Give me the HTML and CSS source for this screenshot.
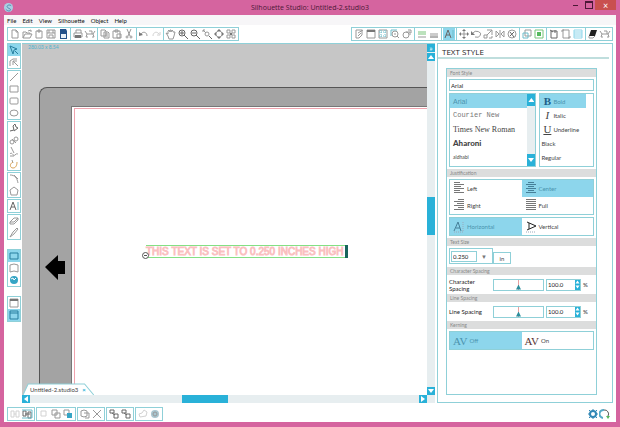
FILE: index.html
```html
<!DOCTYPE html>
<html lang="en">
<head>
  <meta charset="UTF-8">
  <meta name="viewport" content="width=device-width, initial-scale=1.0">
  <title>Silhouette Studio: Untitled-2.studio3</title>
  <link rel="stylesheet" href="styles.css">
</head>
<body>
  <!-- Icon set, 12x12 grid -->
  <svg class="sprite" aria-hidden="true">
    <symbol id="new" viewBox="0 0 12 12"><path d="M3 2h4l2 2v6H3zM7 2v2h2"/></symbol>
    <symbol id="open" viewBox="0 0 12 12"><path d="M2 10V4h3l1 1h3v1M2 10l2-4h7l-2 4zM7 3l3-1v2"/></symbol>
    <symbol id="library" viewBox="0 0 12 12"><path d="M3 3h6v7H3zM5 2h2v2H5z"/></symbol>
    <symbol id="save" viewBox="0 0 12 12"><path d="M2 2h8v8H2zM4 2v3h4V2M4 10V7h4v3M2 5h2M8 5h2"/></symbol>
    <symbol id="card" viewBox="0 0 12 12"><path class="navy" d="M3 1h6l1 2v8H3z"/><path class="paper" d="M4 6h5v4H4z"/></symbol>
    <symbol id="print" viewBox="0 0 12 12"><path d="M4 5V2h5v3M2 5h8v4H2z"/><path class="ink" d="M3 7h6v3H3z"/></symbol>
    <symbol id="cutter" viewBox="0 0 12 12"><path d="M1 3l2 3h6l2-3M3 6L2 9h2M9 6l1 3H8M5 3h3v3"/></symbol>
    <symbol id="copy" viewBox="0 0 12 12"><path d="M2 2h4l1 1v5H2zM5 4h4l1 1v5H5zM6 6h3M6 8h3"/></symbol>
    <symbol id="paste" viewBox="0 0 12 12"><path d="M2 3h7v7H2zM4 2h3v2H4zM6 6h4v4H6z"/></symbol>
    <symbol id="cut" viewBox="0 0 12 12"><path d="M4 1l3 7M8 1L5 8"/><circle cx="4" cy="9" r="1"/><circle cx="8" cy="9" r="1"/></symbol>
    <symbol id="undo" viewBox="0 0 12 12"><path d="M3 6c2-3 6-2 6 2"/><path class="ink" d="M1 4v4l4-1z"/></symbol>
    <symbol id="redo" viewBox="0 0 12 12"><path class="faint" d="M9 6C7 3 3 4 3 8M10 4v3H7"/></symbol>
    <symbol id="pan" viewBox="0 0 12 12"><path d="M3 8L1 5l2 1V3l1-1 1 2V2h1v2l1-2 1 1v1l2 0-1 4-1 3H4z"/></symbol>
    <symbol id="zoomin" viewBox="0 0 12 12"><circle class="bold" cx="5" cy="5" r="3"/><path class="bold" d="M7 7l4 4M5 3v4M3 5h4"/></symbol>
    <symbol id="zoomout" viewBox="0 0 12 12"><circle class="bold" cx="5" cy="5" r="3"/><path class="bold" d="M7 7l4 4M3 5h4"/></symbol>
    <symbol id="zoomsel" viewBox="0 0 12 12"><path d="M2 2l3 3M2 4V2h2"/><circle cx="6" cy="6" r="2"/><path class="bold" d="M8 8l3 3"/></symbol>
    <symbol id="drag" viewBox="0 0 12 12"><circle cx="6" cy="6" r="3"/><path class="ink" d="M6 1l2 2H4zM6 11l2-2H4zM1 6l2-2v4zM11 6L9 4v4z"/></symbol>
    <symbol id="fit" viewBox="0 0 12 12"><path d="M2 2h3v3H2zM7 2h3v3H7zM2 7h3v3H2zM7 7h3v3H7z"/><path class="ink" d="M5 5h2v2H5z"/></symbol>
    <symbol id="page" viewBox="0 0 12 12"><path d="M3 2h6v5l-3 3H3zM5 5l5-3M5 8l3-3"/></symbol>
    <symbol id="window" viewBox="0 0 12 12"><path d="M2 2h8v8H2z"/><path class="ink" d="M2 2h8v2H2z"/></symbol>
    <symbol id="grid" viewBox="0 0 12 12"><path d="M2 2h8v8H2z"/><path class="teal" d="M4 2v8M8 2v8M2 4h8M2 8h8" stroke-dasharray="1 1"/></symbol>
    <symbol id="loupe" viewBox="0 0 12 12"><path class="teal" d="M2 2h6M2 2v6"/><circle cx="6" cy="6" r="3"/><path d="M8 8l2 2M6 5v2"/></symbol>
    <symbol id="offset" viewBox="0 0 12 12"><circle cx="5" cy="7" r="3"/><path d="M5 4h4v3M7 2h3v3"/></symbol>
    <symbol id="lines" viewBox="0 0 12 12"><path class="green" d="M2 4h8M2 6h8"/><path d="M2 9h8"/></symbol>
    <symbol id="ruler" viewBox="0 0 12 12"><path class="bold" d="M2 9h8"/><path d="M3 5v3M5 5v3M7 5v3M9 5v3"/></symbol>
    <symbol id="letter" viewBox="0 0 12 12"><path d="M2 10l3-8 3 8M3 7h4" class="bold"/><path class="teal" d="M10 2v8"/></symbol>
    <symbol id="move" viewBox="0 0 12 12"><path d="M6 2v8M2 6h8"/><path class="ink" d="M6 1l2 2H4zM6 11l2-2H4zM1 6l2-2v4zM11 6L9 4v4z"/></symbol>
    <symbol id="rotate" viewBox="0 0 12 12"><path d="M3 5a4 3 0 1 1 2 4"/><path class="ink" d="M1 3v4h4z"/></symbol>
    <symbol id="scale" viewBox="0 0 12 12"><path d="M2 7h3v3H2zM5 2h5v5M5 7l5-5M7 10h3V8"/></symbol>
    <symbol id="mirror" viewBox="0 0 12 12"><path d="M2 3v6l3-3zM10 3v6L7 6zM6 2v8"/></symbol>
    <symbol id="replicate" viewBox="0 0 12 12"><circle cx="6" cy="6" r="4"/><path class="bold" d="M4 4l4 5M8 4L4 8"/></symbol>
    <symbol id="modify" viewBox="0 0 12 12"><path d="M4 2h6v6H4z"/><path class="teal" d="M2 5h5v5H2z"/></symbol>
    <symbol id="trace" viewBox="0 0 12 12"><path class="green" d="M2 2h8v8H2z"/><path class="greenfill" d="M4 4h4v4H4z"/></symbol>
    <symbol id="book" viewBox="0 0 12 12"><path class="bold" d="M3 3h6v7H3zM2 2l3 2M7 2v3"/></symbol>
    <symbol id="regmark" viewBox="0 0 12 12"><path d="M3 2h6v8H3z"/><path d="M2 4V2h2M8 10h2V8"/></symbol>
    <symbol id="mesh" viewBox="0 0 12 12"><path class="sky" d="M2 2h8v8H2zM2 4h8M2 6h8M2 8h8"/></symbol>
    <symbol id="blade" viewBox="0 0 12 12"><path class="black" d="M4 2h6L8 8H2z"/><path d="M2 8v2h4l2-2"/></symbol>

    <symbol id="select" viewBox="0 0 12 12"><path class="tealdark" d="M2 2l7 3-3 1-1 4zM7 7l3 3"/></symbol>
    <symbol id="nodes" viewBox="0 0 12 12"><path d="M2 10V5l3-2h4M5 5l5 5M5 5v4M5 5h4"/></symbol>
    <symbol id="line" viewBox="0 0 12 12"><path d="M2 10l8-8"/></symbol>
    <symbol id="rect" viewBox="0 0 12 12"><path d="M2 3h8v6H2z"/></symbol>
    <symbol id="rrect" viewBox="0 0 12 12"><rect x="2" y="3" width="8" height="6" rx="1"/></symbol>
    <symbol id="ellipse" viewBox="0 0 12 12"><ellipse cx="6" cy="6" rx="4" ry="3"/></symbol>
    <symbol id="poly" viewBox="0 0 12 12"><path class="bold" d="M2 9l4-1-1-4 2-2 1 3 2 1-4 3"/></symbol>
    <symbol id="curve" viewBox="0 0 12 12"><circle cx="4" cy="8" r="2"/><circle cx="8" cy="5" r="2"/><path d="M4 5l4 4"/></symbol>
    <symbol id="freehand" viewBox="0 0 12 12"><path d="M3 1l3 6M2 8c2-3 3 3 5 1s2-1 3-1M2 10h4"/></symbol>
    <symbol id="smooth" viewBox="0 0 12 12"><path d="M4 2l1 3"/><path class="orange" d="M5 4C1 6 2 10 5 10s4-3 4-6"/></symbol>
    <symbol id="arc" viewBox="0 0 12 12"><path d="M2 2c5 0 7 3 8 8M6 2l4 4"/></symbol>
    <symbol id="polygon" viewBox="0 0 12 12"><path d="M6 2l4 3-1 5H3L2 5z"/></symbol>
    <symbol id="eraser" viewBox="0 0 12 12"><path d="M2 7l4-4h4l0 2-4 4H2zM2 7h4l4-4"/></symbol>
    <symbol id="knife" viewBox="0 0 12 12"><path d="M2 10l3-5 4-4 1 1-4 5z"/></symbol>
    <symbol id="viewdesign" viewBox="0 0 12 12"><path class="tealdark" d="M2 3h8v6H2z"/></symbol>
    <symbol id="viewpage" viewBox="0 0 12 12"><path d="M2 3l4-1 4 1v7L6 9l-4 1z"/></symbol>
    <symbol id="globe" viewBox="0 0 12 12"><circle class="cyan" cx="6" cy="6" r="4"/><path class="white" d="M3 5l2-1 1 2 2-2"/></symbol>
    <symbol id="ball" viewBox="0 0 12 12"><circle class="mist" cx="6" cy="6" r="4"/><circle cx="6" cy="6" r="2"/></symbol>
    <symbol id="split" viewBox="0 0 12 12"><path class="tealdark" d="M2 2h8v8H2zM2 4h8"/></symbol>

    <symbol id="group" viewBox="0 0 12 12"><path class="faint" d="M2 3h3v6H2zM7 3h3v6H7zM5 6h2"/></symbol>
    <symbol id="ungroup" viewBox="0 0 12 12"><path class="bold" d="M2 3h3v5H2zM7 4h3v6H7zM4 6h5"/><path class="teal" d="M1 2h10v8H1"/></symbol>
    <symbol id="blank" viewBox="0 0 12 12"><path class="faint" d="M3 3h5v5H3z"/></symbol>
    <symbol id="front" viewBox="0 0 12 12"><path d="M2 2h5v5H2zM5 5h5v5H5z"/></symbol>
    <symbol id="weld" viewBox="0 0 12 12"><path d="M2 2h5v5H2z"/><path class="cyan" d="M5 5h5v5H5z"/></symbol>
    <symbol id="dup" viewBox="0 0 12 12"><path d="M2 3l3-1 3 1v5l-3 1-3-1zM5 5h5v5H6"/></symbol>
    <symbol id="delete" viewBox="0 0 12 12"><path d="M2 2l8 8M10 2l-8 8"/></symbol>
    <symbol id="chain" viewBox="0 0 12 12"><path class="bold" d="M2 2h4v3H2zM6 6h4v4H6zM4 5l3 2"/></symbol>
    <symbol id="cloud" viewBox="0 0 12 12"><path class="faint" d="M3 9L2 6l3-1 2-3 3 2-1 4z"/></symbol>
    <symbol id="gear" viewBox="0 0 12 12"><circle class="thick" cx="6" cy="6" r="3"/><path class="teeth" d="M6 1v2M6 9v2M1 6h2M9 6h2M2 2l2 2M8 8l2 2M10 2L8 4M4 8l-2 2"/></symbol>
    <symbol id="refresh" viewBox="0 0 12 12"><path class="refresh" d="M4 10a4 4 0 0 1 1-8"/><path class="dark" d="M5 2a4 4 0 0 1 4 6"/><path class="greenfill" d="M7 8l4 0-2 3z"/></symbol>
  </svg>

  <header class="titlebar">
    <svg class="logo" viewBox="0 0 10 10"><circle cx="5" cy="5" r="5" fill="#a9cfe3"/><path d="M8 3C6 1 2 3 4 5s4 1 3 3-4 0-5-1" fill="none" stroke="#4f87ad"/></svg>
    <h1>Silhouette Studio: Untitled-2.studio3</h1>
    <div class="window-buttons">
      <button class="win minimize" aria-label="Minimize"></button>
      <button class="win maximize" aria-label="Maximize"></button>
      <button class="win close" aria-label="Close">×</button>
    </div>
  </header>

  <div class="window">
    <nav class="menu">
      <button>File</button>
      <button>Edit</button>
      <button>View</button>
      <button>Silhouette</button>
      <button>Object</button>
      <button>Help</button>
    </nav>

    <div class="toolbar">
      <div class="tools" data-icons="new open library save card"></div>
      <div class="tools" data-icons="print cutter"></div>
      <div class="tools" data-icons="copy paste cut"></div>
      <div class="tools" data-icons="undo redo"></div>
      <div class="tools" data-icons="pan zoomin zoomout zoomsel drag fit"></div>
      <div class="tools push" data-icons="page window grid loupe offset"></div>
      <div class="tools" data-icons="lines ruler"></div>
      <div class="tools" data-icons="letter" data-active="letter"></div>
      <div class="tools" data-icons="move rotate scale mirror replicate"></div>
      <div class="tools" data-icons="modify trace"></div>
      <div class="tools" data-icons="book regmark mesh"></div>
      <div class="tools" data-icons="blade cutter"></div>
    </div>

    <div class="workspace">
      <div class="sidebar">
        <div class="tools vertical" data-icons="select nodes" data-active="select"></div>
        <div class="tools vertical" data-icons="line rect rrect ellipse"></div>
        <div class="tools vertical" data-icons="poly curve freehand smooth"></div>
        <div class="tools vertical" data-icons="arc polygon"></div>
        <div class="tools vertical" data-icons="letter"></div>
        <div class="tools vertical" data-icons="eraser knife"></div>
        <div class="tools vertical spaced" data-icons="viewdesign viewpage globe" data-active="viewdesign"></div>
        <div class="tools vertical spaced" data-icons="window split" data-active="split"></div>
      </div>

      <main class="document">
        <div class="canvas-row">
          <div class="canvas">
            <span class="coords">280.03 x 8.54</span>
            <div class="mat">
              <div class="sheet"></div>
            </div>
            <svg class="feed-arrow" viewBox="0 0 20 25"><path d="M0 12L13 0v6h7v13h-7v6z"/></svg>
            <div class="text-object">
              <span>THIS TEXT IS SET TO 0.250 INCHES HIGH</span>
              <i class="handle"></i>
              <i class="caret"></i>
            </div>
            <button class="doc-tab">
              <svg viewBox="0 0 70 12" preserveAspectRatio="none"><path d="M0 12L5 1h55l9 11"/></svg>
              <span>Untitled-2.studio3</span><b>×</b>
            </button>
          </div>
          <div class="scrollbar">
            <button class="scroll-button" aria-label="Expand">»</button>
            <button class="scroll-button up" aria-label="Scroll up"></button>
            <div class="track"><div class="thumb"></div></div>
            <button class="scroll-button down" aria-label="Scroll down"></button>
          </div>
        </div>
        <div class="scrollbar horizontal">
          <button class="scroll-button left" aria-label="Scroll left"></button>
          <div class="track"><div class="thumb"></div></div>
          <button class="scroll-button right" aria-label="Scroll right"></button>
        </div>
      </main>

      <aside class="panel">
        <h2>TEXT STYLE</h2>
        <div class="panel-body">
          <section>
            <h3><label for="font">Font Style</label></h3>
            <input class="font-name" id="font" type="text" value="Arial">
            <div class="font-row">
              <div class="font-list">
                <div class="options">
                  <button class="arial active">Arial</button>
                  <button class="courier">Courier New</button>
                  <button class="times">Times New Roman</button>
                  <button class="aharoni">Aharoni</button>
                  <button class="aldhabi">aldhabi</button>
                </div>
                <div class="scrollbar">
                  <button class="scroll-button up" aria-label="Fonts up"></button>
                  <button class="scroll-button down" aria-label="Fonts down"></button>
                </div>
              </div>
              <div class="style-list">
                <button class="active"><b class="glyph bold-glyph">B</b>Bold</button>
                <button><i class="glyph">I</i>Italic</button>
                <button><u class="glyph">U</u>Underline</button>
                <button>Black</button>
                <button>Regular</button>
              </div>
            </div>
          </section>

          <section>
            <h3>Justification</h3>
            <div class="choices">
              <button><svg class="rules" viewBox="0 0 12 12"><path d="M1 0h6v1H1zM1 2h10v1H1zM1 4h7v1H1zM1 6h10v1H1zM1 8h6v1H1zM1 10h10v1H1z"/></svg>Left</button>
              <button class="active"><svg class="rules" viewBox="0 0 12 12"><path d="M3 0h6v1H3zM1 2h10v1H1zM3 4h6v1H3zM1 6h10v1H1zM3 8h6v1H3zM1 10h10v1H1z"/></svg>Center</button>
              <button><svg class="rules" viewBox="0 0 12 12"><path d="M5 0h6v1H5zM1 2h10v1H1zM4 4h7v1H4zM1 6h10v1H1zM5 8h6v1H5zM1 10h10v1H1z"/></svg>Right</button>
              <button><svg class="rules" viewBox="0 0 12 12"><path d="M1 0h10v1H1zM1 2h10v1H1zM1 4h10v1H1zM1 6h10v1H1zM1 8h10v1H1zM1 10h10v1H1z"/></svg>Full</button>
            </div>
            <div class="choices">
              <button class="active"><svg viewBox="0 0 12 12"><path class="sketch" d="M1 10L5 1l3 9M3 7h4"/><path class="dots" d="M10 1v10M1 11h10"/></svg>Horizontal</button>
              <button><svg viewBox="0 0 12 12"><path class="sketch" d="M2 1l9 4-9 4M4 2v6"/><path class="dots" d="M1 11h10"/></svg>Vertical</button>
            </div>
          </section>

          <section>
            <h3><label for="size">Text Size</label></h3>
            <div class="size-row">
              <div class="combo">
                <input id="size" type="text" value="0.250">
                <button aria-label="Sizes">▼</button>
              </div>
              <button class="unit">in</button>
            </div>
          </section>

          <section>
            <h3>Character Spacing</h3>
            <div class="spacing">
              <label for="char-range">Character Spacing</label>
              <input id="char-range" type="range" value="50">
              <div class="stepper">
                <input type="text" value="100.0" aria-label="Character spacing value">
                <span class="steps"><button aria-label="Increase"></button><button class="less" aria-label="Decrease"></button></span>
              </div>
              <span>%</span>
            </div>
          </section>

          <section>
            <h3>Line Spacing</h3>
            <div class="spacing">
              <label for="line-range">Line Spacing</label>
              <input id="line-range" type="range" value="50">
              <div class="stepper">
                <input type="text" value="100.0" aria-label="Line spacing value">
                <span class="steps"><button aria-label="Increase"></button><button class="less" aria-label="Decrease"></button></span>
              </div>
              <span>%</span>
            </div>
          </section>

          <section>
            <h3>Kerning</h3>
            <div class="choices kerning">
              <button class="active"><b>AV</b>Off</button>
              <button><b>AV</b>On</button>
            </div>
          </section>
        </div>
      </aside>
    </div>

    <footer class="toolbar bottom">
      <div class="tools" data-icons="group ungroup"></div>
      <div class="tools" data-icons="blank front weld"></div>
      <div class="tools" data-icons="dup delete"></div>
      <div class="tools" data-icons="chain chain"></div>
      <div class="tools" data-icons="cloud ball"></div>
      <div class="tools plain push" data-icons="gear refresh"></div>
    </footer>
  </div>

  <script>
    // Fill every tool group with its icon buttons
    document.querySelectorAll('.tools').forEach(group => {
      group.dataset.icons.split(' ').forEach(name => {
        const active = group.dataset.active === name ? ' active' : '';
        group.insertAdjacentHTML('beforeend',
          `<button class="tool${active}" aria-label="${name}"><svg><use href="#${name}"/></svg></button>`);
      });
    });
  </script>
</body>
</html>
```
FILE: styles.css
```css
:root {
  --pink: #d5649f;
  --edge: #8fd0d8;
  --cyan: #29b1d8;
  --active: #8dd6ec;
  --header: #dcdddd;
  --text: #444;
}

* {
  box-sizing: border-box;
}

body {
  margin: 0;
  height: 100vh;
  padding: 0 4px 5px;
  display: flex;
  flex-direction: column;
  background: var(--pink);
  color: var(--text);
  font-family: Lato, "Open Sans", sans-serif;
  font-size: 6px;
  overflow: hidden;
}

button,
input {
  margin: 0;
  padding: 0;
  border: 0;
  border-radius: 0;
  background: none;
  color: inherit;
  font: inherit;
}

h1,
h2,
h3 {
  margin: 0;
  font-weight: normal;
}

.sprite {
  position: absolute;
  width: 0;
  height: 0;
}

/* Title bar */
.titlebar {
  flex: none;
  height: 15px;
  display: grid;
  grid-template-columns: 1fr auto 1fr;
  align-items: center;
}

.logo {
  width: 9px;
  height: 9px;
}

.titlebar h1 {
  font-family: "Open Sans", sans-serif;
  font-size: 7px;
  color: #4b1836;
}

.window-buttons {
  display: flex;
  justify-content: flex-end;
  align-self: start;
}

.win {
  width: 13px;
  height: 10px;
  display: flex;
  align-items: center;
  justify-content: center;
}

.minimize::before {
  content: "";
  width: 5px;
  height: 1px;
  background: #4b1836;
}

.maximize::before {
  content: "";
  width: 6px;
  height: 5px;
  border: 1px solid #4b1836;
  border-top-width: 2px;
}

.close {
  width: 21px;
  background: #c9504f;
  color: #fff;
  font-size: 9px;
}

.window {
  flex: 1;
  min-height: 0;
  display: flex;
  flex-direction: column;
  background: #fff;
}

.menu {
  flex: none;
  height: 10px;
  padding-left: 3px;
  display: flex;
  align-items: center;
  gap: 6px;
  background: #f7f6f8;
  color: #111;
}

/* Icon toolbars */
.toolbar {
  flex: none;
  display: flex;
  padding: 2px 3px;
}

.tools {
  display: flex;
  padding: 0 1px;
  border: 1px solid var(--edge);
}

.toolbar .tools + .tools {
  margin-left: -1px;
}

.tools.vertical {
  flex-direction: column;
  padding: 0;
}

.tools.spaced {
  margin-top: 8px;
}

.tool {
  width: 12px;
  height: 12px;
  display: flex;
}

.tool.active {
  background: var(--active);
}

.tool svg {
  width: 12px;
  height: 12px;
}

symbol {
  fill: none;
  stroke: #999;
}

symbol .bold { stroke: #666; }
symbol .faint { stroke: #d2d2d2; }
symbol .teal { stroke: #6cbccb; }
symbol .tealdark { stroke: #277f9f; }
symbol .sky { stroke: #8fd6ea; }
symbol .green { stroke: #79c47b; }
symbol .orange { stroke: #d9a55c; }
symbol .white { stroke: #fff; }
symbol .ink { fill: #777; stroke: none; }
symbol .black { fill: #222; stroke: none; }
symbol .navy { fill: #24528a; stroke: none; }
symbol .paper { fill: #e8f0f8; stroke: none; }
symbol .cyan { fill: #35a5c5; stroke: none; }
symbol .mist { fill: #a9c6d0; stroke: none; }
symbol .greenfill { fill: #55b95d; stroke: none; }
symbol .thick { stroke: #3187b5; stroke-width: 2; }
symbol .teeth { stroke: #3187b5; }
symbol .refresh { stroke: #55a9c8; stroke-width: 2; }
symbol .dark { stroke: #555; }

.toolbar.bottom {
  padding: 4px 3px 1px;
}

.bottom .tools + .tools {
  margin-left: 1px;
}

.toolbar .tools.push {
  margin-left: auto;
}

.tools.plain {
  border-color: transparent;
}

/* Workspace */
.workspace {
  flex: 1;
  min-height: 0;
  display: flex;
  padding: 0 3px;
}

.sidebar {
  display: flex;
  flex-direction: column;
  gap: 1px;
  margin-right: 1px;
}

.document {
  flex: 1;
  min-width: 0;
  display: flex;
  flex-direction: column;
  border-top: 1px solid var(--edge);
}

.canvas-row {
  flex: 1;
  min-height: 0;
  display: flex;
}

.canvas {
  flex: 1;
  min-width: 0;
  position: relative;
  display: flex;
  padding: 43px 0 0 17px;
  background: #c6c6c6;
  overflow: hidden;
}

.coords {
  position: absolute;
  left: 6px;
  top: 0;
  font-size: 5px;
  color: #4fb4d0;
}

.mat {
  flex: 1;
  display: flex;
  padding: 18px 0 0 31px;
  background: #a3a3a3;
  border: solid #555;
  border-width: 1px 0 0 1px;
  border-top-left-radius: 8px;
}

.sheet {
  flex: 1;
  background: #fff;
  border: solid #777;
  border-width: 1px 0 0 1px;
  padding: 1px 0 0 2px;
}

.sheet::before {
  content: "";
  display: block;
  height: 100%;
  border: solid #f0a3ae;
  border-width: 1px 0 0 1px;
}

.feed-arrow {
  position: absolute;
  left: 23px;
  top: 211px;
  width: 20px;
  height: 25px;
}

.text-object {
  position: absolute;
  left: 124px;
  top: 201px;
  padding-right: 3px;
  border: solid #84e084;
  border-width: 1px 0;
  line-height: 11px;
  white-space: nowrap;
  font-family: "Liberation Sans", Arial, sans-serif;
  font-size: 10px;
  color: #fff;
  -webkit-text-stroke: 1px #fac0c0;
}

.handle {
  position: absolute;
  left: -4px;
  bottom: -2px;
  width: 7px;
  height: 7px;
  border: 1px solid #555;
  border-radius: 50%;
  background: linear-gradient(#555, #555) center / 3px 1px no-repeat #fff;
}

.caret {
  position: absolute;
  right: -2px;
  top: -1px;
  width: 3px;
  height: 13px;
  background: #17645c;
}

.doc-tab {
  position: absolute;
  left: 1px;
  bottom: 0;
  height: 12px;
  padding: 0 9px 0 7px;
  display: flex;
  align-items: center;
  gap: 4px;
}

.doc-tab svg {
  position: absolute;
  left: 0;
  top: 0;
  width: 100%;
  height: 12px;
  fill: #fff;
  stroke: var(--edge);
}

.doc-tab span,
.doc-tab b {
  position: relative;
}

.doc-tab b {
  color: var(--cyan);
}

/* Scrollbars */
.scrollbar {
  flex: none;
  width: 8px;
  display: flex;
  flex-direction: column;
  gap: 1px;
  background: #e7eef0;
}

.scrollbar.horizontal {
  width: auto;
  height: 8px;
  flex-direction: row;
  padding-right: 8px;
}

.scroll-button {
  width: 8px;
  height: 8px;
  display: flex;
  align-items: center;
  justify-content: center;
  background: var(--cyan);
  color: #fff;
  font-size: 8px;
  line-height: 8px;
}

.scroll-button.up::before,
.scroll-button.down::before,
.scroll-button.left::before,
.scroll-button.right::before {
  content: "";
  width: 6px;
  height: 4px;
  background: #fff;
  clip-path: polygon(50% 0, 100% 100%, 0 100%);
}

.scroll-button.down::before {
  transform: rotate(180deg);
}

.scroll-button.left::before {
  transform: rotate(-90deg);
}

.scroll-button.right::before {
  transform: rotate(90deg);
}

.track {
  flex: 1;
  display: flex;
  flex-direction: column;
  padding-top: 135px;
}

.thumb {
  height: 38px;
  background: var(--cyan);
}

.horizontal .track {
  flex-direction: row;
  padding: 0 0 0 151px;
}

.horizontal .thumb {
  width: 46px;
  height: 8px;
}

/* Text style panel */
.panel {
  flex: none;
  width: 176px;
  margin-left: 2px;
  display: flex;
  flex-direction: column;
  border: 1px solid var(--edge);
}

.panel h2 {
  padding: 2px 0 0 4px;
  margin: 0 3px 9px 0;
  height: 15px;
  font-family: "Open Sans", sans-serif;
  font-size: 8px;
  line-height: 11px;
  border-bottom: 2px solid #bfdedd;
  color: #222;
}

.panel-body {
  flex: 1;
  margin: 0 15px 7px 8px;
  border: 1px solid var(--edge);
}

.panel section {
  display: flex;
  flex-direction: column;
  gap: 2px;
  padding-bottom: 2px;
}

.panel h3 {
  height: 8px;
  padding-left: 3px;
  font-size: 5px;
  line-height: 8px;
  background: var(--header);
  color: #888;
}

.font-name {
  height: 12px;
  margin: 0 2px;
  padding-left: 1px;
  border: 1px solid var(--edge);
  color: #222;
}

.font-row {
  display: grid;
  grid-template-columns: 8fr 5fr;
  gap: 3px;
  margin: 0 2px;
}

.font-list,
.style-list {
  height: 74px;
  border: 1px solid var(--edge);
}

.font-list {
  display: flex;
}

.font-list .scrollbar {
  justify-content: space-between;
}

.font-list .scroll-button {
  height: 12px;
}

.options {
  flex: 1;
}

.options button,
.style-list button {
  display: flex;
  align-items: center;
  width: 100%;
  height: 14px;
  padding-left: 3px;
  white-space: nowrap;
}

.style-list button {
  padding-left: 1px;
}

.font-row .active {
  background: var(--active);
  color: #4b93ae;
}

.options .arial { font-family: "Liberation Sans", Arial, sans-serif; font-size: 7px; }
.options .courier { font-family: "Liberation Mono", "Courier New", monospace; font-size: 7px; color: #777; }
.options .times { font-family: "Liberation Serif", "Times New Roman", serif; font-size: 8px; }
.options .aharoni { font-size: 8px; font-weight: 900; }
.options .aldhabi { font-size: 5px; }

.style-list {
  padding-right: 7px;
}

.glyph {
  width: 12px;
  text-align: center;
  font-family: "Liberation Serif", serif;
  font-size: 11px;
}

.bold-glyph {
  color: #1d5f88;
}

.choices {
  display: grid;
  grid-template-columns: 1fr 1fr;
  margin: 0 2px;
  border: 1px solid var(--edge);
}

.choices button {
  height: 17px;
  padding-left: 3px;
  display: flex;
  align-items: center;
  gap: 2px;
}

.choices .active {
  background: var(--active);
  color: #4b93ae;
}

.choices svg {
  width: 12px;
  height: 12px;
  fill: none;
  stroke: #888;
}

.choices .active svg {
  stroke: #457f98;
}

.choices .rules,
.choices .active .rules {
  height: 12px;
  margin-bottom: 1px;
  fill: #777;
  stroke: none;
  shape-rendering: crispEdges;
}

.choices .active .rules {
  fill: #457f98;
}

.choices .dots {
  stroke-dasharray: 1 1;
  stroke: #9ab;
}

.choices button:not(.active) .sketch {
  stroke: #222;
}

.size-row {
  display: flex;
  align-items: flex-end;
  margin: 0 2px 1px;
}

.combo {
  display: flex;
  align-items: center;
  width: 44px;
  height: 16px;
  padding: 1px;
  border: 1px solid var(--edge);
}

.combo input {
  width: 26px;
  height: 11px;
  padding-left: 1px;
  border: 1px solid var(--edge);
  color: #222;
}

.combo button {
  flex: 1;
  color: #777;
}

.unit {
  width: 18px;
  height: 12px;
  border: 1px solid var(--edge);
}

.spacing {
  display: grid;
  grid-template-columns: 42px 51px 35px auto;
  align-items: center;
  gap: 2px;
  height: 15px;
  margin-left: 2px;
  line-height: 7px;
  color: #222;
}

.spacing input[type="range"] {
  appearance: none;
  width: 51px;
  height: 12px;
  border: 1px solid var(--edge);
  background: linear-gradient(#e8a0a0, #e8a0a0) center / 1px 100% no-repeat;
}

.spacing input[type="range"]::-webkit-slider-thumb {
  appearance: none;
  width: 5px;
  height: 5px;
  margin-top: 5px;
  background: #2b8e9c;
  clip-path: polygon(50% 0, 100% 100%, 0 100%);
}

.stepper {
  display: flex;
  height: 12px;
  border: 1px solid var(--edge);
}

.stepper input {
  flex: 1;
  min-width: 0;
  padding-left: 1px;
}

.steps {
  width: 5px;
  display: flex;
  flex-direction: column;
  background: var(--cyan);
}

.steps button {
  flex: 1;
  background: #fff;
  clip-path: polygon(50% 20%, 90% 80%, 10% 80%);
}

.steps .less {
  clip-path: polygon(50% 80%, 90% 20%, 10% 20%);
}

.kerning b {
  font-family: "Liberation Serif", serif;
  font-size: 11px;
  font-weight: normal;
}

.kerning button:not(.active) b {
  color: #533;
}
```
